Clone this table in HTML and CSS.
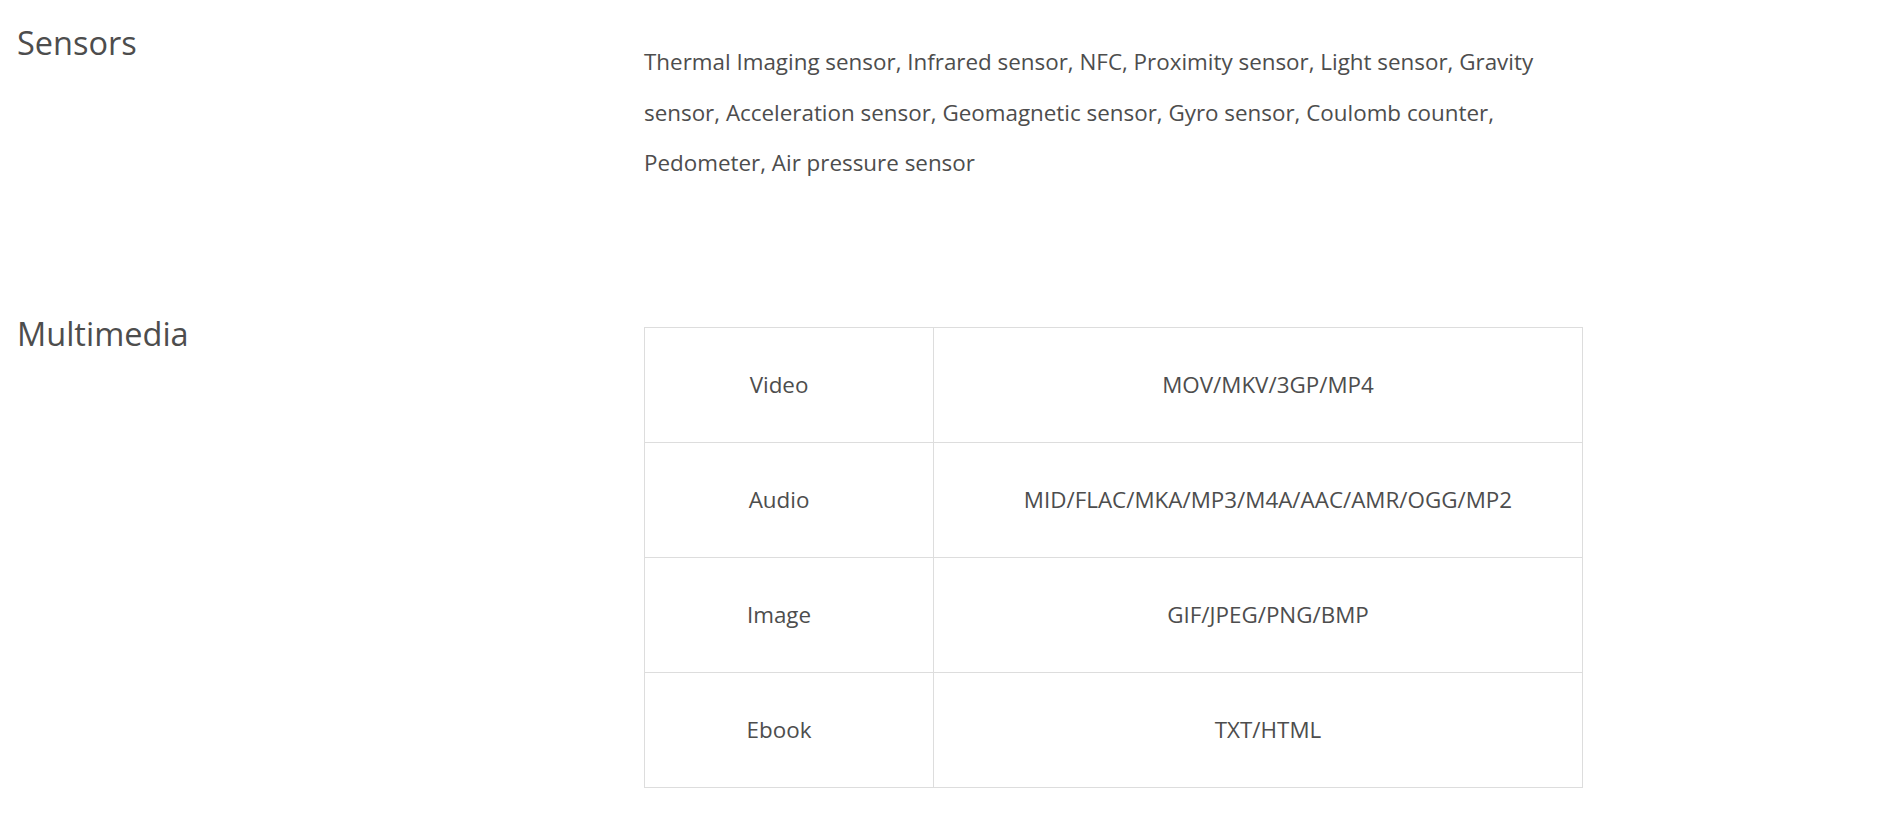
FILE: index.html
```html
<!DOCTYPE html>
<html lang="en">
<head>
<meta charset="utf-8">
<title>Specs</title>
<link rel="stylesheet" href="styles.css">
</head>
<body>
<div class="specs">
  <section class="spec-row sensors">
    <h2 class="spec-title">Sensors</h2>
    <div class="spec-body">
      <p class="spec-text">Thermal Imaging sensor, Infrared sensor, NFC, Proximity sensor, Light sensor, Gravity sensor, Acceleration sensor, Geomagnetic sensor, Gyro sensor, Coulomb counter, Pedometer, Air pressure sensor</p>
    </div>
  </section>
  <section class="spec-row multimedia">
    <h2 class="spec-title">Multimedia</h2>
    <div class="spec-body">
      <table class="spec-table">
        <tr><td class="col-name">Video</td><td class="col-value">MOV/MKV/3GP/MP4</td></tr>
        <tr><td class="col-name">Audio</td><td class="col-value">MID/FLAC/MKA/MP3/M4A/AAC/AMR/OGG/MP2</td></tr>
        <tr><td class="col-name">Image</td><td class="col-value">GIF/JPEG/PNG/BMP</td></tr>
        <tr><td class="col-name">Ebook</td><td class="col-value">TXT/HTML</td></tr>
      </table>
    </div>
  </section>
</div>
</body>
</html>
```
FILE: styles.css
```css
html, body {
  margin: 0;
  padding: 0;
  background: #ffffff;
}
body {
  font-family: "Open Sans", "Noto Sans", sans-serif;
  color: #4d4d4d;
}
.specs {
  display: flex;
  flex-direction: column;
}
.spec-row {
  display: flex;
  align-items: flex-start;
}
.spec-title {
  width: 627px;
  padding-left: 17px;
  margin: 0;
  font-size: 32.5px;
  font-weight: 400;
  line-height: 44px;
  color: #4d4d4d;
  flex: none;
}
.spec-body {
  width: 939px;
  flex: none;
}
.sensors {
  padding-top: 21px;
}
.sensors .spec-body {
  padding-top: 16px;
}
.spec-text {
  margin: 0;
  font-size: 22.4px;
  line-height: 50.5px;
}
.multimedia {
  margin-top: 123px;
}
.multimedia .spec-body {
  padding-top: 15px;
}
.spec-table {
  width: 939px;
  border-collapse: collapse;
  font-size: 22.4px;
}
.spec-table td {
  border: 1px solid #dddddd;
  height: 114px;
  text-align: center;
  vertical-align: middle;
  padding: 0;
}
.spec-table td.col-name {
  width: 268px;
  padding-right: 20px;
}
.spec-table td.col-value {
  padding-left: 20px;
}
```
